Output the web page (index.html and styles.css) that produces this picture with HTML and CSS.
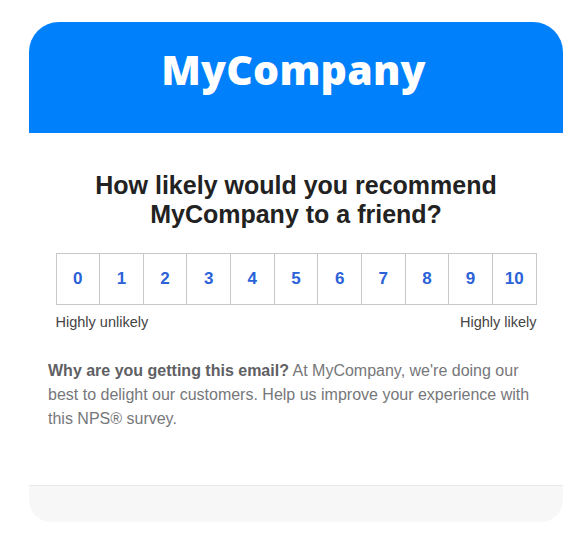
FILE: index.html
```html
<!DOCTYPE html>
<html>
<head>
<meta charset="utf-8">
<link rel="stylesheet" href="styles.css">
</head>
<body>
<div class="card">
  <div class="header"><span class="logo">MyCompany</span></div>
  <div class="content">
    <h1 class="question">How likely would you recommend<br>MyCompany to a friend?</h1>
    <div class="scale">
      <a class="cell">0</a><a class="cell">1</a><a class="cell">2</a><a class="cell">3</a><a class="cell">4</a><a class="cell">5</a><a class="cell">6</a><a class="cell">7</a><a class="cell">8</a><a class="cell">9</a><a class="cell">10</a>
    </div>
    <div class="labels"><span>Highly unlikely</span><span>Highly likely</span></div>
    <p class="why"><b>Why are you getting this email?</b> At MyCompany, we're doing our best to delight our customers. Help us improve your experience with this NPS® survey.</p>
  </div>
  <div class="footer"></div>
</div>
</body>
</html>
```
FILE: styles.css
```css
html, body { margin: 0; padding: 0; background: #fff; }
body { padding: 22px 20px 0 29px; font-family: "Liberation Sans", Arial, sans-serif; }
.card { width: 534px; }
.header {
  background: #0081fb;
  height: 111px;
  border-radius: 30px 30px 0 0;
  display: flex;
  justify-content: center;
  box-sizing: border-box;
  padding-top: 19px;
}
.logo {
  font-family: "Open Sans", sans-serif;
  font-weight: 800;
  font-size: 41px;
  line-height: 56px;
  color: #fff;
  letter-spacing: 0.2px;
  margin-left: -5px;
}
.content { padding: 38px 19px 0 19px; }
.question {
  margin: 0;
  text-align: center;
  font-size: 25px;
  line-height: 29px;
  font-weight: 700;
  color: #222;
}
.scale {
  margin: 24px auto 0;
  width: 481px;
  display: grid;
  grid-template-columns: repeat(11, 1fr);
  border: 1px solid #c8c8c8;
  border-right: none;
  box-sizing: border-box;
}
.cell {
  height: 50px;
  display: flex;
  align-items: center;
  justify-content: center;
  border-right: 1px solid #c8c8c8;
  color: #2b62d8;
  font-weight: 700;
  font-size: 17px;
}
.labels {
  width: 481px;
  margin: 9px auto 0;
  display: flex;
  justify-content: space-between;
  font-size: 14.5px;
  line-height: 17px;
  color: #444;
}
.why {
  margin: 28px 0 0 0;
  font-size: 16px;
  line-height: 24px;
  color: #76777a;
  padding-right: 8px;
}
.why b { color: #5f6064; }
.footer {
  margin-top: 54px;
  height: 36px;
  background: #f7f7f7;
  border-top: 1px solid #e8e8e8;
  border-radius: 0 0 22px 22px;
}
```
